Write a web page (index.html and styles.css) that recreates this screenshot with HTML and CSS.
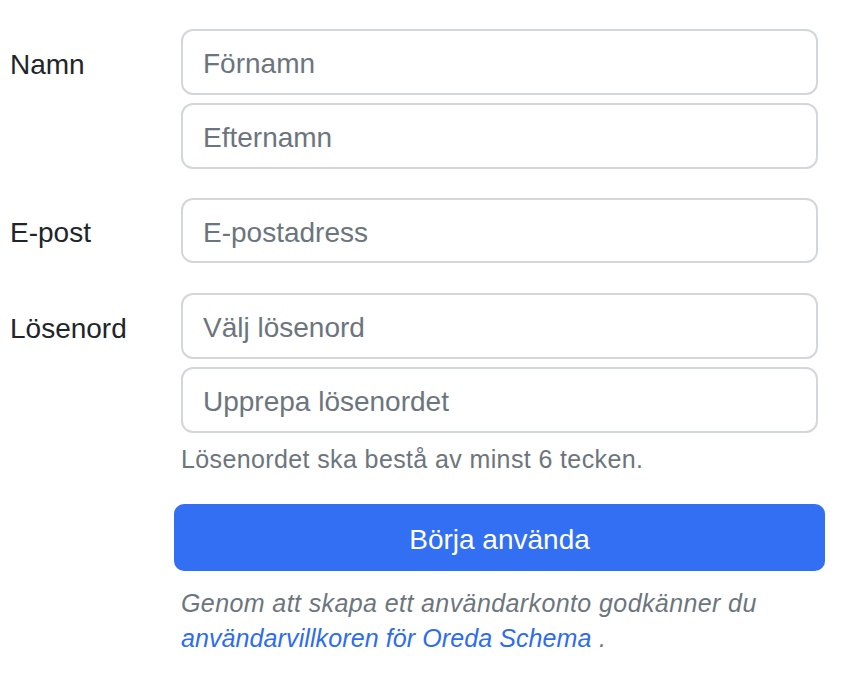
FILE: index.html
```html
<!DOCTYPE html>
<html lang="sv">
<head>
<meta charset="utf-8">
<title>Registrera</title>
<link rel="stylesheet" href="styles.css">
</head>
<body>
<form class="form">
  <div class="row">
    <label class="label">Namn</label>
    <div class="fields">
      <input class="input" type="text" placeholder="Förnamn">
      <input class="input" type="text" placeholder="Efternamn">
    </div>
  </div>
  <div class="row">
    <label class="label">E-post</label>
    <div class="fields">
      <input class="input" type="email" placeholder="E-postadress">
    </div>
  </div>
  <div class="row">
    <label class="label">Lösenord</label>
    <div class="fields">
      <input class="input" type="password" placeholder="Välj lösenord">
      <input class="input" type="password" placeholder="Upprepa lösenordet">
      <p class="help">Lösenordet ska bestå av minst 6 tecken.</p>
    </div>
  </div>
  <div class="row">
    <div class="label"></div>
    <div class="fields">
      <button class="btn" type="button">Börja använda</button>
      <p class="terms">Genom att skapa ett användarkonto godkänner du <a href="#" class="link">användarvillkoren för Oreda Schema</a> .</p>
    </div>
  </div>
</form>
</body>
</html>
```

FILE: styles.css
```css
html, body {
  margin: 0;
  padding: 0;
  background: #ffffff;
}

body {
  font-family: "Liberation Sans", Arial, sans-serif;
  color: #212529;
  font-size: 28px;
}

.form {
  padding: 29px 0 0 10px;
  width: 808px;
}

.row {
  display: grid;
  grid-template-columns: 171px 637px;
  margin-bottom: 29px;
}

.label {
  display: block;
  font-size: 28px;
  line-height: 62px;
  padding-top: 4.5px;
  color: #212529;
}

.fields {
  display: flex;
  flex-direction: column;
  gap: 8.5px;
}

.input {
  box-sizing: border-box;
  width: 100%;
  height: 65.5px;
  margin: 0;
  padding: 5px 20px 0;
  border: 2px solid #d3d6da;
  border-radius: 12px;
  background: #fff;
  font-family: "Liberation Sans", Arial, sans-serif;
  font-size: 28px;
  color: #212529;
  outline: none;
}

.input::placeholder {
  color: #6c757d;
  opacity: 1;
}

.help {
  margin: -1.5px 0 0;
  font-size: 25px;
  letter-spacing: 0.38px;
  line-height: 38px;
  color: #6c757d;
}

.btn {
  box-sizing: border-box;
  margin: -3px -7px 0;
  width: calc(100% + 14px);
  height: 67px;
  border: none;
  border-radius: 10px;
  background: #336ff3;
  color: #ffffff;
  font-family: "Liberation Sans", Arial, sans-serif;
  font-size: 28px;
  padding: 5px 0 0;
  cursor: pointer;
}

.terms {
  margin: 7px 0 0;
  font-size: 25px;
  letter-spacing: 0.4px;
  line-height: 35px;
  font-style: italic;
  color: #6c757d;
}

.link {
  color: #2d6cf0;
  text-decoration: none;
  letter-spacing: 0.1px;
}
```
